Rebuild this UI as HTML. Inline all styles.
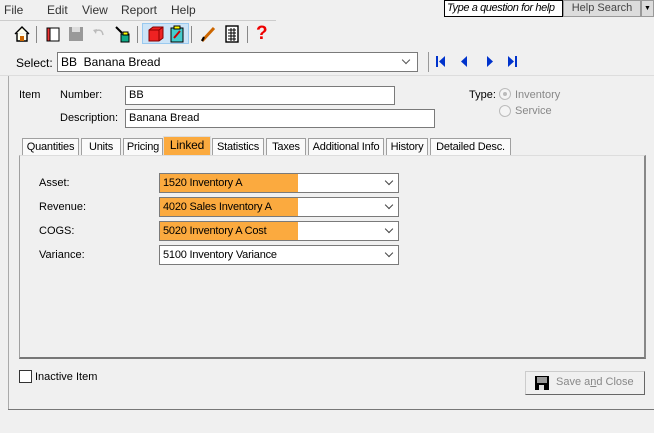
<!DOCTYPE html>
<html><head><style>
body{margin:0;width:654px;height:433px;background:#f0f0f0;font-family:"Liberation Sans",sans-serif;font-size:11px;color:#000;position:relative;overflow:hidden}
.a{position:absolute;white-space:nowrap}
.in{position:absolute;background:#fff;border:1px solid #7a7a7a;box-sizing:border-box;padding-left:3px;line-height:17px;white-space:nowrap}
.cb{position:absolute;background:#fff;border:1px solid #7a7a7a;box-sizing:border-box;height:20px;white-space:nowrap}
.cb .o{position:absolute;left:0;top:0;bottom:0;width:138px;background:#fbaa3f}
.cb span{position:absolute;left:3px;top:3px;letter-spacing:-0.2px}
.cb i{position:absolute;right:6px;top:4px;width:5px;height:5px;border-right:1px solid #444;border-bottom:1px solid #444;transform:rotate(45deg)}
.tab{position:absolute;top:138px;height:17px;border:1px solid #a0a0a0;border-bottom:none;background:#fafafa;box-sizing:border-box;text-align:center;line-height:16px;white-space:nowrap;letter-spacing:-0.2px}
.ic{position:absolute;top:25px;width:18px;height:18px}
</style></head><body>
<div class="a" style="top:3px;left:4px;font-size:12px;color:#333">File</div>
<div class="a" style="top:3px;left:47px;font-size:12px;color:#333">Edit</div>
<div class="a" style="top:3px;left:82px;font-size:12px;color:#333">View</div>
<div class="a" style="top:3px;left:121px;font-size:12px;color:#333">Report</div>
<div class="a" style="top:3px;left:171px;font-size:12px;color:#333">Help</div>
<div class="a" style="left:444px;top:0;width:119px;height:17px;border:1px solid #000;box-sizing:border-box;background:#fff;font-style:italic;line-height:15px;padding-left:2px;font-size:11px;letter-spacing:-0.4px;overflow:hidden">Type a question for help</div>
<div class="a" style="left:563px;top:0;width:78px;height:17px;background:#dcdcdc;border:1px solid #999;box-sizing:border-box;color:#444;text-align:center;line-height:15px">Help Search</div>
<div class="a" style="left:641px;top:0;width:13px;height:17px;background:#dcdcdc;border:1px solid #999;box-sizing:border-box;font-size:7px;text-align:center;line-height:15px">▼</div>
<div class="a" style="left:0;top:20px;width:276px;height:1px;background:#ccc"></div>
<svg class="ic" style="left:13px" viewBox="0 0 18 18"><path d="M2 9L9 2L16 9M4 8V16H14V8" fill="#ffe" stroke="#000" stroke-width="1.4"/><rect x="7" y="11" width="4" height="5" fill="#c60"/></svg>
<div class="a" style="left:36px;top:26px;width:1px;height:17px;background:#888"></div>
<svg class="ic" style="left:44px" viewBox="0 0 18 18"><rect x="3" y="3" width="10" height="13" fill="#e33" stroke="#000"/><rect x="6" y="3" width="9" height="13" fill="#fff" stroke="#000"/></svg>
<svg class="ic" style="left:67px" viewBox="0 0 18 18"><rect x="2" y="2" width="14" height="14" fill="#999"/><rect x="5" y="2" width="8" height="5" fill="#ddd"/></svg>
<svg class="ic" style="left:90px" viewBox="0 0 18 18"><path d="M5 6Q12 3 13 10" fill="none" stroke="#bbb" stroke-width="1.5"/><path d="M3 5L6 9L7 4Z" fill="#bbb"/></svg>
<svg class="ic" style="left:113px" viewBox="0 0 18 18"><path d="M3 2L9 8" stroke="#000" stroke-width="2"/><rect x="8" y="9" width="8" height="8" fill="#1a8" stroke="#000"/><rect x="10" y="7" width="5" height="3" fill="#ff0" stroke="#000"/></svg>
<div class="a" style="left:137px;top:26px;width:1px;height:17px;background:#888"></div>
<div class="a" style="left:142px;top:23px;width:47px;height:21px;background:#cce4f7;border:1px solid #99c9ef;box-sizing:border-box"></div>
<svg class="ic" style="left:147px" viewBox="0 0 18 18"><path d="M2 5L6 2H16V13L12 16H2Z" fill="#e22" stroke="#800"/><path d="M2 5H12V16M12 5L16 2" fill="none" stroke="#800"/></svg>
<svg class="ic" style="left:168px" viewBox="0 0 18 18"><rect x="3" y="3" width="12" height="14" fill="#4cc" stroke="#000"/><rect x="6" y="1" width="6" height="3" fill="#ff0" stroke="#000"/><path d="M6 13L12 6" stroke="#c00" stroke-width="2"/></svg>
<div class="a" style="left:191px;top:26px;width:1px;height:17px;background:#888"></div>
<svg class="ic" style="left:199px" viewBox="0 0 18 18"><path d="M3 16L15 3" stroke="#c60" stroke-width="3"/><path d="M3 16L5 12" stroke="#000" stroke-width="2"/></svg>
<svg class="ic" style="left:223px" viewBox="0 0 18 18"><rect x="3" y="1" width="12" height="16" fill="#fff" stroke="#000" stroke-width="1.4"/><path d="M5 5H13M5 8H13M5 11H13M5 14H13M8 3V16M11 3V16" stroke="#000"/></svg>
<div class="a" style="left:247px;top:26px;width:1px;height:17px;background:#888"></div>
<div class="a" style="left:256px;top:23px;font-size:19px;font-weight:bold;color:#e00">?</div>
<div class="a" style="left:16px;top:56px;font-size:12px">Select:</div>
<div class="in" style="left:57px;top:52px;width:361px;height:20px;font-size:12px;line-height:18px">BB&nbsp; Banana Bread</div>
<div class="a" style="left:403px;top:57px;width:5px;height:5px;border-right:1px solid #555;border-bottom:1px solid #555;transform:rotate(45deg)"></div>
<div class="a" style="left:428px;top:52px;width:1px;height:20px;background:#999"></div>
<svg class="a" style="left:434px;top:54px" width="86" height="16" viewBox="0 0 86 16"><rect x="2" y="2" width="2" height="11" fill="#0033cc"/><path d="M11 2V13L5 7.5Z" fill="#0033cc"/><path d="M33 2V13L27 7.5Z" fill="#0033cc"/><path d="M53 2V13L59 7.5Z" fill="#0033cc"/><path d="M74 2V13L80 7.5Z" fill="#0033cc"/><rect x="81" y="2" width="2" height="11" fill="#0033cc"/></svg>
<div class="a" style="left:0;top:75px;width:654px;height:1px;background:#ddd"></div>
<div class="a" style="left:8px;top:76px;width:1px;height:334px;background:#aaa"></div>
<div class="a" style="left:19px;top:89px">Item</div>
<div class="a" style="left:60px;top:89px">Number:</div>
<div class="in" style="left:125px;top:86px;width:270px;height:19px">BB</div>
<div class="a" style="left:60px;top:112px">Description:</div>
<div class="in" style="left:125px;top:109px;width:310px;height:19px">Banana Bread</div>
<div class="a" style="left:469px;top:89px">Type:</div>
<div class="a" style="left:499px;top:88px;width:12px;height:12px;border:1px solid #bbb;border-radius:50%;box-sizing:border-box;background:#f4f4f4"><div style="margin:3px;width:4px;height:4px;border-radius:50%;background:#bbb"></div></div>
<div class="a" style="left:515px;top:89px;color:#888">Inventory</div>
<div class="a" style="left:499px;top:105px;width:12px;height:12px;border:1px solid #bbb;border-radius:50%;box-sizing:border-box;background:#f4f4f4"></div>
<div class="a" style="left:515px;top:105px;color:#888">Service</div>
<div class="a" style="left:19px;top:155px;width:627px;height:204px;border:1px solid #a0a0a0;border-top:1px solid #ddd;border-bottom:2px solid #777;border-right:2px solid #888;box-sizing:border-box"></div>
<div class="tab" style="left:22px;width:57px">Quantities</div>
<div class="tab" style="left:81px;width:40px">Units</div>
<div class="tab" style="left:123px;width:40px">Pricing</div>
<div class="tab" style="left:163px;width:48px;background:#fbaa3f;top:136px;height:19px;border-color:#ddd;font-size:12px">Linked</div>
<div class="tab" style="left:212px;width:52px">Statistics</div>
<div class="tab" style="left:266px;width:40px">Taxes</div>
<div class="tab" style="left:308px;width:76px">Additional Info</div>
<div class="tab" style="left:386px;width:42px">History</div>
<div class="tab" style="left:430px;width:81px">Detailed Desc.</div>
<div class="a" style="left:39px;top:177px">Asset:</div>
<div class="cb" style="left:159px;top:173px;width:240px"><div class="o"></div><span>1520 Inventory A</span><i></i></div>
<div class="a" style="left:39px;top:201px">Revenue:</div>
<div class="cb" style="left:159px;top:197px;width:240px"><div class="o"></div><span>4020 Sales Inventory A</span><i></i></div>
<div class="a" style="left:39px;top:225px">COGS:</div>
<div class="cb" style="left:159px;top:221px;width:240px"><div class="o"></div><span>5020 Inventory A Cost</span><i></i></div>
<div class="a" style="left:39px;top:249px">Variance:</div>
<div class="cb" style="left:159px;top:245px;width:240px"><span>5100 Inventory Variance</span><i></i></div>
<div class="a" style="left:19px;top:370px;width:13px;height:13px;border:1px solid #333;box-sizing:border-box;background:#fff"></div>
<div class="a" style="left:35px;top:371px">Inactive Item</div>
<div class="a" style="left:525px;top:371px;width:120px;height:24px;border:1px solid #ccc;border-right-color:#666;border-bottom-color:#666;box-sizing:border-box;background:#f0f0f0"></div>
<svg class="a" style="left:535px;top:376px" width="14" height="14" viewBox="0 0 14 14"><rect width="14" height="14" fill="#000"/><rect x="2" y="1" width="10" height="6" fill="#999"/><rect x="4" y="9" width="5" height="5" fill="#ddd"/></svg>
<div class="a" style="left:556px;top:376px;color:#888">Save a<u>n</u>d Close</div>
<div class="a" style="left:8px;top:409px;width:646px;height:1px;background:#777"></div>
</body></html>
